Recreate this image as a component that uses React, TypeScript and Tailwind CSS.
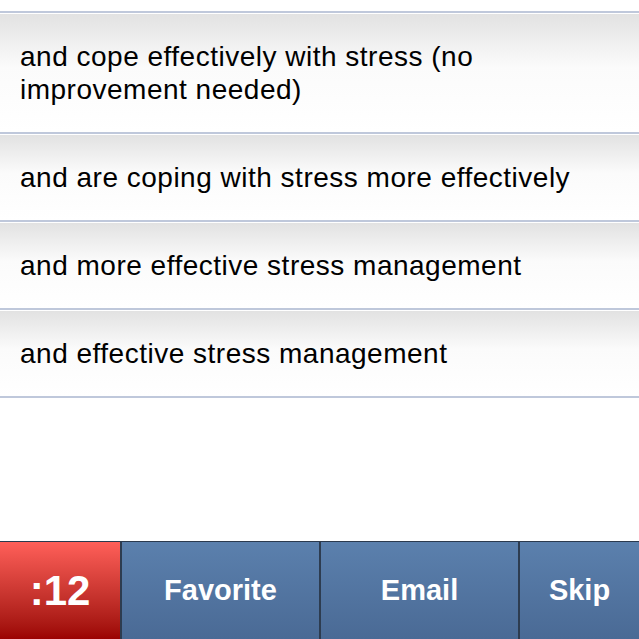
const rows = [
  "and cope effectively with stress (no improvement needed)",
  "and are coping with stress more effectively",
  "and more effective stress management",
  "and effective stress management",
];

const buttons = ["Favorite", "Email", "Skip"];

export default function App() {
  return (
    <div
      className="flex h-[639px] w-[639px] flex-col bg-white"
      style={{ fontFamily: '"Liberation Sans", Arial, sans-serif' }}
    >
      <div className="h-[11px] bg-white" />
      <ul className="border-t-2 border-[#bfc8db]">
        {rows.map((r) => (
          <li
            key={r}
            className="border-b-2 border-[#bfc8db] border-t border-t-white bg-gradient-to-b from-[#e2e2e2] via-[#fbfbfb] via-45% to-white py-[26px] pl-[20px] pr-[40px] text-[28px] leading-[33px] tracking-[0.5px] text-black"
          >
            {r}
          </li>
        ))}
      </ul>

      <div className="flex-1" />

      {/* bottom bar */}
      <div className="flex h-[98px] border-t border-[#2b3a4e] text-white">
        <div className="flex w-[120px] items-center justify-center bg-gradient-to-b from-[#ff5f59] to-[#9b0202] text-[42px] font-bold">
          :12
        </div>
        {buttons.map((b, i) => (
          <div
            key={b}
            className={
              "flex items-center justify-center border-l-2 border-[#2d3c50] bg-gradient-to-b from-[#5b80ad] to-[#4a6a95] text-[29px] font-bold " +
              (i === 2 ? "flex-1" : "w-[199px]")
            }
          >
            {b}
          </div>
        ))}
      </div>
    </div>
  );
}
